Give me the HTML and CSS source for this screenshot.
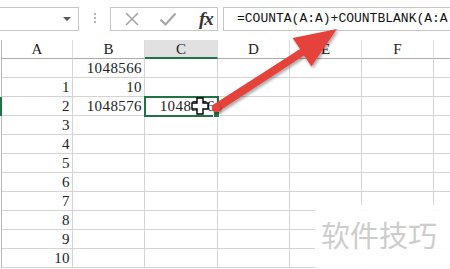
FILE: index.html
```
<!DOCTYPE html>
<html lang="en">
<head>
    <meta charset="UTF-8">
    <title>COUNTA + COUNTBLANK</title>
    <link rel="stylesheet" href="styles.css">
</head>
<body>
    <div class="toolbar">
        <div class="name-box"><span class="drop"></span></div>
        <div class="dots"></div>
        <div class="buttons">
            <svg class="btn-icon" width="16" height="16" viewBox="0 0 16 16">
                <path d="M2 2 L14 14 M14 2 L2 14" stroke="#a6a6a6" stroke-width="1.6" fill="none"/>
            </svg>
            <svg class="btn-icon" width="18" height="16" viewBox="0 0 18 16">
                <path d="M1.5 8.5 L6.5 13.5 L16.5 2.5" stroke="#a6a6a6" stroke-width="2.2" fill="none"/>
            </svg>
            <span class="fx">fx</span>
        </div>
        <div class="formula">=COUNTA(A:A)+COUNTBLANK(A:A)</div>
    </div>

    <div class="sheet">
        <div class="corner"></div>
        <div class="head">A</div>
        <div class="head">B</div>
        <div class="head active">C</div>
        <div class="head">D</div>
        <div class="head">E</div>
        <div class="head">F</div>
        <div class="head last"></div>
    </div>
    <div class="sheet" id="rows"></div>

    <svg class="arrow" width="450" height="269" viewBox="0 0 450 269">
        <defs>
            <filter id="shadow" x="-10%" y="-10%" width="130%" height="130%">
                <feDropShadow dx="1.5" dy="2" stdDeviation="1.5" flood-color="#000" flood-opacity="0.35"/>
            </filter>
        </defs>
        <polygon filter="url(#shadow)" fill="#e5433b"
            points="218.5,111.5 304,55.5 311.4,66.4 337,29 292.6,38.1 300,49 213.5,104.5"/>
        <circle filter="url(#shadow)" cx="216" cy="108" r="4.2" fill="#e5433b"/>
    </svg>

    <svg class="cursor" width="18" height="18" viewBox="0 0 18 18">
        <path d="M6 1 H12 V6 H17 V12 H12 V17 H6 V12 H1 V6 H6 Z" fill="#fff" stroke="#000" stroke-width="1.4"/>
    </svg>

    <div class="watermark">软件技巧</div>

    <script>
        const data = [
            ['', '1048566', ''],
            ['1', '10', ''],
            ['2', '1048576', '1048576'],
            ['3', '', ''], ['4', '', ''], ['5', '', ''], ['6', '', ''],
            ['7', '', ''], ['8', '', ''], ['9', '', ''], ['10', '', '']
        ];
        const rows = document.getElementById('rows');
        data.forEach((row, r) => {
            const side = document.createElement('div');
            side.className = 'side' + (r === 2 ? ' active' : '');
            rows.appendChild(side);
            for (let c = 0; c < 7; c++) {
                const cell = document.createElement('div');
                cell.className = 'cell' + (c === 6 ? ' last' : '');
                if (r === 2 && c === 2) cell.classList.add('selected');
                cell.textContent = row[c] || '';
                rows.appendChild(cell);
            }
        });
    </script>
</body>
</html>
```

FILE: styles.css
```
body {
    margin: 0;
    width: 450px;
    height: 269px;
    overflow: hidden;
    background: #fff;
    position: relative;
    font-family: 'Liberation Serif', serif;
    color: #222;
}

.toolbar {
    display: flex;
    align-items: center;
    height: 24px;
    padding-top: 7px;
    padding-bottom: 9px;
}

.name-box {
    width: 79px;
    height: 24px;
    border: 1px solid #c6c6c6;
    border-left: none;
    display: flex;
    align-items: center;
    justify-content: flex-end;
    box-sizing: border-box;
}

.drop {
    width: 0;
    height: 0;
    border-left: 4px solid transparent;
    border-right: 4px solid transparent;
    border-top: 4px solid #555;
    margin-right: 7px;
}

.dots {
    width: 2px;
    height: 12px;
    margin: 0 14px 0 15px;
    background-image: linear-gradient(#b5b5b5 2px, transparent 2px);
    background-size: 2px 4px;
}

.buttons {
    width: 108px;
    height: 24px;
    box-sizing: border-box;
    border: 1px solid #c6c6c6;
    display: flex;
    align-items: center;
    padding-left: 13px;
    gap: 19px;
}

.btn-icon {
    flex: none;
}

.fx {
    font-family: 'Liberation Serif', serif;
    font-style: italic;
    font-weight: bold;
    font-size: 19px;
    color: #333;
    margin-left: 3px;
    letter-spacing: -1px;
}

.formula {
    flex: 1;
    height: 24px;
    box-sizing: border-box;
    margin-left: 5px;
    border: 1px solid #c6c6c6;
    border-right: none;
    font-family: 'Liberation Mono', monospace;
    font-size: 13px;
    line-height: 22px;
    padding-left: 13px;
    white-space: nowrap;
    overflow: hidden;
    color: #111;
}

.sheet {
    display: grid;
    grid-template-columns: 2px 71px 72px 73px 72px 72px 72px 1fr;
}

.corner {
    border-right: 1px solid #b8b8b8;
}

.head {
    height: 18px;
    border-right: 1px solid #dadada;
    border-bottom: 1px solid #ababab;
    text-align: center;
    font-size: 15px;
    line-height: 19px;
}

.head.active {
    background: #e1e1e1;
    border-bottom: 2px solid #217346;
    height: 17px;
}

.head.last,
.cell.last {
    border-right: none;
}

.side {
    border-right: 1px solid #b8b8b8;
}

.side.active {
    background: #217346;
    border-right-color: #217346;
}

.cell {
    height: 18px;
    border-right: 1px solid #d4d4d4;
    border-bottom: 1px solid #d4d4d4;
    font-size: 15px;
    letter-spacing: 0.4px;
    line-height: 19px;
    text-align: right;
    padding-right: 2px;
    position: relative;
}

.cell.selected {
    outline: 2px solid #217346;
    outline-offset: -1px;
    z-index: 1;
}

.cell.selected::after {
    content: '';
    position: absolute;
    right: -3px;
    bottom: -3px;
    width: 5px;
    height: 5px;
    background: #217346;
    border: 1px solid #fff;
}

.arrow {
    position: absolute;
    left: 0;
    top: 0;
    z-index: 3;
}

.cursor {
    position: absolute;
    left: 191px;
    top: 97px;
    z-index: 2;
}

.watermark {
    position: absolute;
    left: 315px;
    top: 205px;
    width: 135px;
    height: 64px;
    background: rgba(255, 255, 255, 0.92);
    font-family: 'Noto Sans CJK SC', sans-serif;
    font-size: 29px;
    color: #cdcdcd;
    padding-left: 6px;
    padding-top: 8px;
    box-sizing: border-box;
    z-index: 4;
}
```
